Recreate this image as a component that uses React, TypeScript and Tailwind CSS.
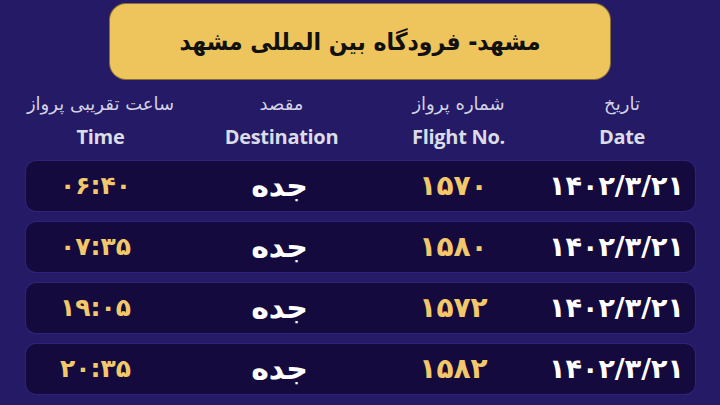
import React from "react";

const rows = [
  { time: "۰۶:۴۰", dest: "جده", flight: "۱۵۷۰", date: "۱۴۰۲/۳/۲۱" },
  { time: "۰۷:۳۵", dest: "جده", flight: "۱۵۸۰", date: "۱۴۰۲/۳/۲۱" },
  { time: "۱۹:۰۵", dest: "جده", flight: "۱۵۷۲", date: "۱۴۰۲/۳/۲۱" },
  { time: "۲۰:۳۵", dest: "جده", flight: "۱۵۸۲", date: "۱۴۰۲/۳/۲۱" },
];

const fa = { fontFamily: '"DejaVu Sans", "Noto Sans", sans-serif' };
const en = { fontFamily: '"Open Sans", "Liberation Sans", sans-serif' };

export default function App() {
  const headers = [
    { fa: "ساعت تقریبی پرواز", en: "Time" },
    { fa: "مقصد", en: "Destination" },
    { fa: "شماره پرواز", en: "Flight No." },
    { fa: "تاریخ", en: "Date" },
  ];
  return (
    <div className="w-[720px] h-[405px] overflow-hidden bg-[#241a66] flex flex-col items-center">
      <div className="mt-[4px] w-[500px] h-[75px] rounded-[16px] bg-[#eec45c] shadow-[0_0_0_1px_#8a6f35] flex items-center justify-center">
        <span dir="rtl" className="text-[22px] font-bold text-[#111] leading-none scale-y-[1.1]" style={fa}>
          مشهد- فرودگاه بین المللی مشهد
        </span>
      </div>
      <div className="w-[669px] mt-[12px] grid grid-cols-[150px_212px_142px_1fr]">
        {headers.map((h, i) => (
          <div key={i} className={`flex flex-col items-center ${i === 3 ? "pl-[20px]" : ""}`}>
            <span dir="rtl" className="text-[18px] text-[#d2d2e2] leading-[26px]" style={fa}>
              {h.fa}
            </span>
            <span className="text-[20px] font-bold text-[#dcdce6] leading-[28px] mt-[6px] tracking-[-0.3px]" style={en}>
              {h.en}
            </span>
          </div>
        ))}
      </div>
      <div className="w-[669px] mt-[10px] flex flex-col gap-[11px]">
        {rows.map((r, i) => (
          <div
            key={i}
            className="h-[50px] rounded-[10px] bg-[#140a3e] grid grid-cols-[140px_228px_120px_1fr] items-center shadow-[0_0_0_1px_#2e2378]"
            style={fa}
          >
            <span className="text-center text-[25px] font-bold text-[#f2c86a]">{r.time}</span>
            <span dir="rtl" className="text-center text-[30px] font-bold text-white leading-none">{r.dest}</span>
            <span className="text-center text-[28px] font-bold text-[#f2c86a]">{r.flight}</span>
            <span className="text-center pl-[25px] text-[27px] font-bold text-white">{r.date}</span>
          </div>
        ))}
      </div>
    </div>
  );
}
